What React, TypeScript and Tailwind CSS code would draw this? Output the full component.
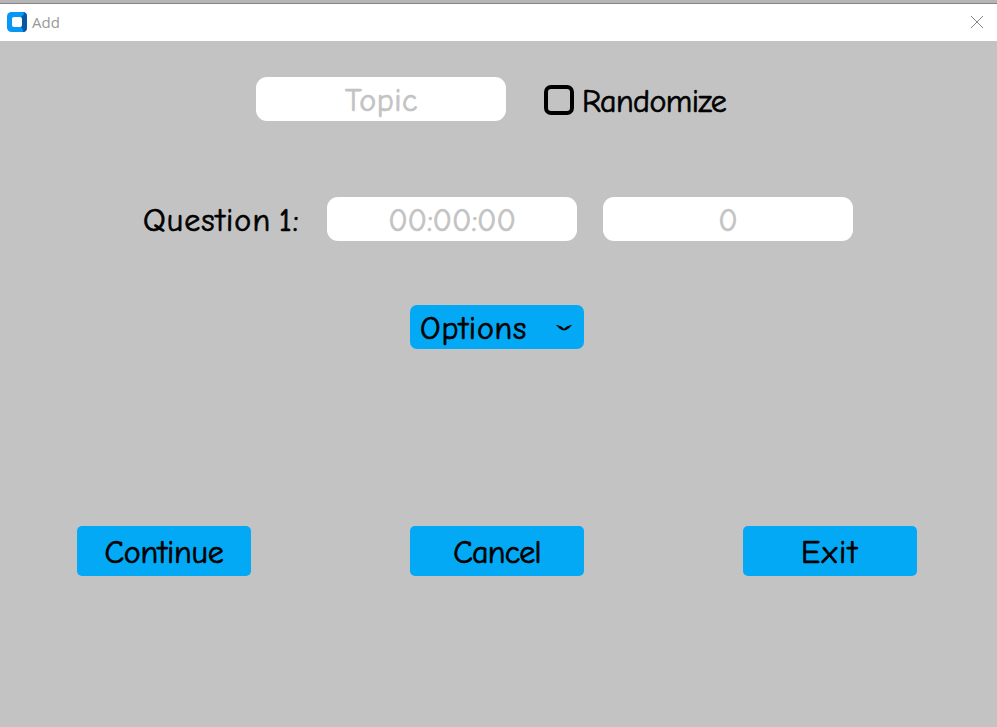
import type { ReactNode } from "react";

function Label({ children, className = "" }: { children: ReactNode; className?: string }) {
  return (
    <span
      className={`block whitespace-pre font-['Comic_Sans_MS','Comic_Neue',Lato,sans-serif] text-[32px] leading-[38px] [-webkit-text-stroke:0.7px_currentColor] ${className}`}
    >
      {children}
    </span>
  );
}

function Field({ children, className = "" }: { children: ReactNode; className?: string }) {
  return (
    <div
      className={`flex h-11 w-[250px] shrink-0 items-center justify-center rounded-[11px] bg-white pt-1 text-[#c3c3c3] ${className}`}
    >
      {children}
    </div>
  );
}

function ActionButton({ children }: { children: ReactNode }) {
  return (
    <button className="flex h-[50px] w-[174px] items-center justify-center rounded-[5px] bg-[#03a9f4] pt-1 text-black">
      {children}
    </button>
  );
}

function AppIcon() {
  return (
    <svg width="20" height="20" viewBox="0 0 20 20">
      <rect width="20" height="20" rx="4.5" fill="#0797f5" />
      <path d="M14 5 L16 0 Q20 0 20 4.5 V15.5 Q20 20 16 20 L14 15 Z" fill="#0757a5" />
      <path d="M13 0 H16 L17.5 1.5 L14.5 5 M14 15 L16.5 19 L15 20 H12" fill="#0797f5" />
      <rect x="5" y="5" width="10" height="10" rx="2" fill="#fff" />
    </svg>
  );
}

export default function App() {
  return (
    <div className="flex h-[727px] w-[997px] flex-col overflow-hidden bg-[#c3c3c3]">
      <header className="flex h-[41px] items-center border-t-[3px] border-[#b5b5b5] bg-white">
        <div className="flex h-full w-full items-center justify-between border-t border-[#858585] pr-[14px] pb-[2px] pl-[7px]">
          <div className="flex items-center gap-[5px]">
            <AppIcon />
            <span className="font-['Segoe_UI','Open_Sans',sans-serif] text-[15px] leading-5 text-[#999]">
              Add
            </span>
          </div>
          <svg width="12" height="12" viewBox="0 0 12 12" fill="none" stroke="#858585" strokeWidth="1">
            <path d="M0 0L12 12M12 0L0 12" />
          </svg>
        </div>
      </header>

      <main className="flex flex-col">
        <div className="mt-9 flex h-11 pl-64">
          <Field>
            <Label className="pl-px tracking-[0.5px]">Topic</Label>
          </Field>
          <div className="ml-[38px] flex items-center">
            <span className="mt-[2px] size-[30px] rounded-[7px] border-4 border-black" />
            <Label className="ml-2 pt-[5px] tracking-[-0.6px]">Randomize</Label>
          </div>
        </div>

        <div className="mt-[76px] flex h-11 pl-[143px]">
          <div className="w-[184px] pt-[5px]">
            <Label className="tracking-[1.1px] [word-spacing:-4px]">Question 1:</Label>
          </div>
          <Field>
            <Label className="tracking-[-0.1px]">00:00:00</Label>
          </Field>
          <Field className="ml-[26px]">
            <Label>0</Label>
          </Field>
        </div>

        <button className="mt-16 ml-[410px] flex h-11 w-[174px] items-center justify-between rounded-[7px] bg-[#03a9f4] pr-[12px] pl-[10px] text-black">
          <Label className="pt-1 tracking-[0.8px]">Options</Label>
          <svg width="16" height="10" viewBox="0 0 16 10" fill="none" stroke="black" strokeLinecap="round">
            <path d="M1 3.5L3 4.5M15 3.5L13 4.5" strokeWidth="1.3" />
            <path d="M3.5 5L6.5 7M12.5 5L9.5 7" strokeWidth="2.6" />
            <path d="M6.5 7.5Q8 8.5 9.5 7.5" strokeWidth="1" />
          </svg>
        </button>

        <div className="mt-[177px] flex justify-between pr-20 pl-[77px]">
          <ActionButton>
            <Label className="tracking-[-0.2px]">Continue</Label>
          </ActionButton>
          <ActionButton>
            <Label className="tracking-[-0.8px]">Cancel</Label>
          </ActionButton>
          <ActionButton>
            <Label className="tracking-[1.8px]">Exit</Label>
          </ActionButton>
        </div>
      </main>
    </div>
  );
}
